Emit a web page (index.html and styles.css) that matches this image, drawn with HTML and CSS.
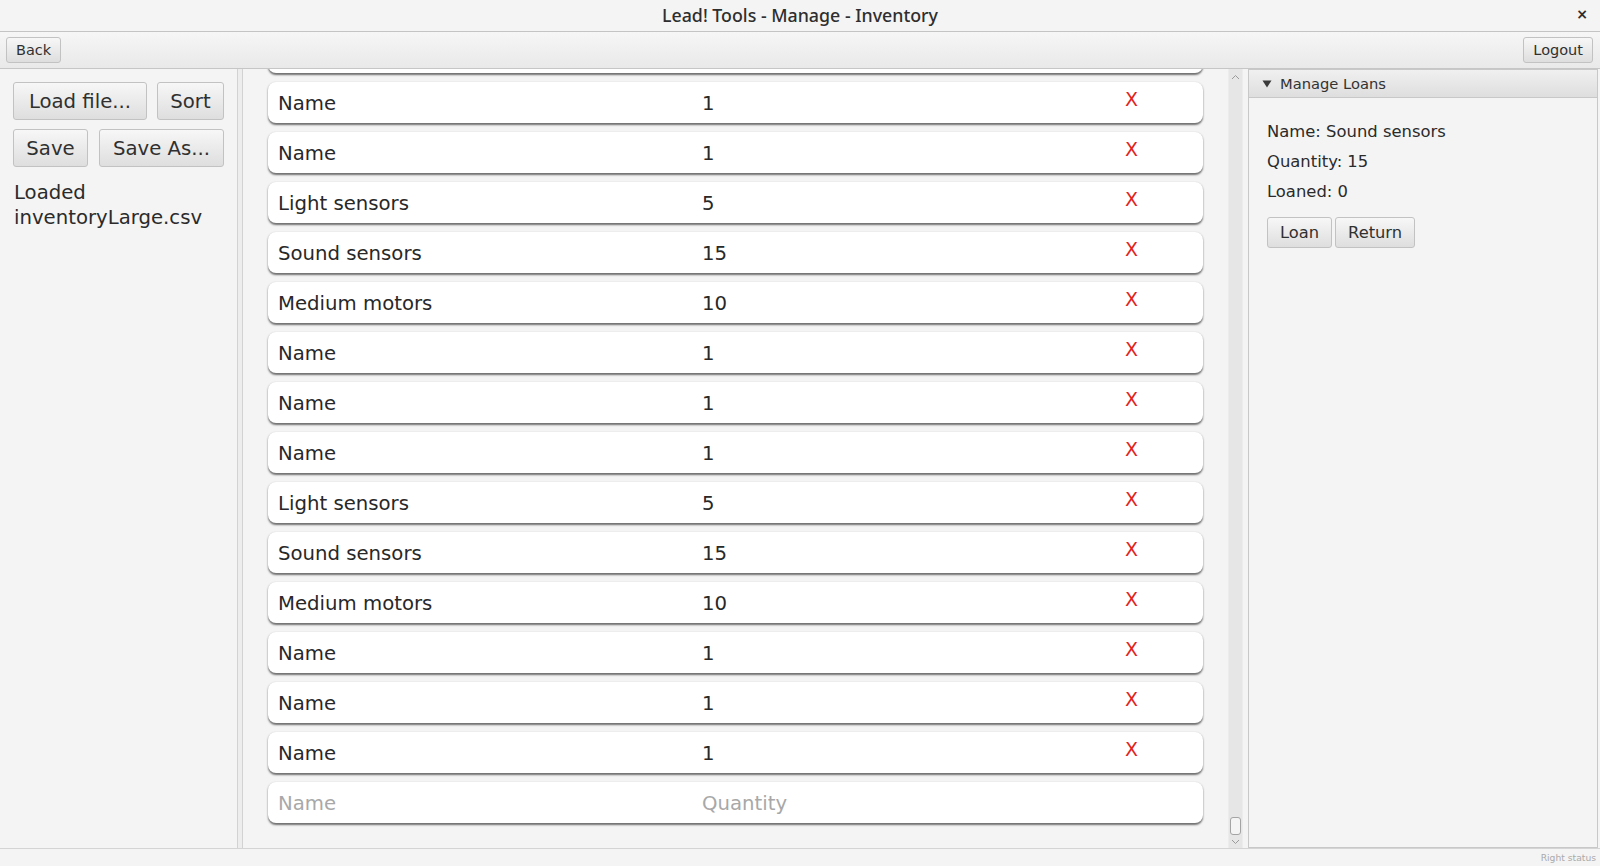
FILE: index.html
```html
<!DOCTYPE html>
<html>
<head>
<meta charset="utf-8">
<title>Lead! Tools - Manage - Inventory</title>
<link rel="stylesheet" href="styles.css">
</head>
<body>
<div class="window">
  <div class="titlebar">
    <span class="title">Lead! Tools - Manage - Inventory</span>
    <span class="close">×</span>
  </div>
  <div class="toolbar">
    <button class="btn tb">Back</button>
    <button class="btn tb">Logout</button>
  </div>
  <div class="main">
    <aside class="left">
      <div class="btnrow">
        <button class="btn big w-load">Load file...</button>
        <button class="btn big w-sort">Sort</button>
      </div>
      <div class="btnrow">
        <button class="btn big w-save">Save</button>
        <button class="btn big w-saveas">Save As...</button>
      </div>
      <div class="loaded">Loaded<br>inventoryLarge.csv</div>
    </aside>
    <div class="divider"></div>
    <div class="center">
      <div class="scroll">
        <div class="list">
          <div class="row"></div>
          <div class="row"><span class="c-name">Name</span><span class="c-qty">1</span><span class="c-del">X</span></div>
          <div class="row"><span class="c-name">Name</span><span class="c-qty">1</span><span class="c-del">X</span></div>
          <div class="row"><span class="c-name">Light sensors</span><span class="c-qty">5</span><span class="c-del">X</span></div>
          <div class="row"><span class="c-name">Sound sensors</span><span class="c-qty">15</span><span class="c-del">X</span></div>
          <div class="row"><span class="c-name">Medium motors</span><span class="c-qty">10</span><span class="c-del">X</span></div>
          <div class="row"><span class="c-name">Name</span><span class="c-qty">1</span><span class="c-del">X</span></div>
          <div class="row"><span class="c-name">Name</span><span class="c-qty">1</span><span class="c-del">X</span></div>
          <div class="row"><span class="c-name">Name</span><span class="c-qty">1</span><span class="c-del">X</span></div>
          <div class="row"><span class="c-name">Light sensors</span><span class="c-qty">5</span><span class="c-del">X</span></div>
          <div class="row"><span class="c-name">Sound sensors</span><span class="c-qty">15</span><span class="c-del">X</span></div>
          <div class="row"><span class="c-name">Medium motors</span><span class="c-qty">10</span><span class="c-del">X</span></div>
          <div class="row"><span class="c-name">Name</span><span class="c-qty">1</span><span class="c-del">X</span></div>
          <div class="row"><span class="c-name">Name</span><span class="c-qty">1</span><span class="c-del">X</span></div>
          <div class="row"><span class="c-name">Name</span><span class="c-qty">1</span><span class="c-del">X</span></div>
          <div class="row input"><span class="c-name">Name</span><span class="c-qty">Quantity</span></div>
        </div>
      </div>
      <div class="vscroll">
        <svg class="arrow" width="9" height="6" viewBox="0 0 9 6"><path d="M1 5 L4.5 1.5 L8 5" fill="none" stroke="#9a9a9a" stroke-width="1"/></svg>
        <div class="vbottom">
          <div class="thumb"></div>
          <svg class="arrow" width="9" height="6" viewBox="0 0 9 6"><path d="M1 1 L4.5 4.5 L8 1" fill="none" stroke="#9a9a9a" stroke-width="1"/></svg>
        </div>
      </div>
    </div>
    <div class="divider2"></div>
    <section class="right">
      <div class="pane-head">
        <svg class="tri" width="10" height="8" viewBox="0 0 10 8"><path d="M0.5 0.5 H9.5 L5 7.5 Z" fill="#3a3a3a"/></svg>
        <span>Manage Loans</span>
      </div>
      <div class="pane-body">
        <div class="info">Name: Sound sensors</div>
        <div class="info">Quantity: 15</div>
        <div class="info">Loaned: 0</div>
        <div class="loanbtns">
          <button class="btn mid">Loan</button>
          <button class="btn mid">Return</button>
        </div>
      </div>
    </section>
  </div>
  <div class="status"><span>Right status</span></div>
</div>
</body>
</html>
```

FILE: styles.css
```css
* { box-sizing: border-box; }
html, body { margin: 0; padding: 0; }
body {
  width: 1600px;
  height: 866px;
  overflow: hidden;
  background: #f4f4f4;
  font-family: "DejaVu Sans", "Liberation Sans", sans-serif;
  color: #2b2b2b;
}
.window {
  display: flex;
  flex-direction: column;
  height: 866px;
}
.titlebar {
  height: 32px;
  flex: none;
  border-bottom: 1px solid #c4c4c4;
  background: #f4f4f4;
  display: flex;
  align-items: center;
  justify-content: center;
  position: relative;
}
.title {
  font-family: "Noto Sans", "DejaVu Sans", sans-serif;
  font-weight: 500;
  font-size: 17.8px;
  color: #2e2e2e;
  margin-top: -1px;
}
.close {
  position: absolute;
  right: 12px;
  top: 6px;
  font-size: 14px;
  font-weight: bold;
  color: #2e2e2e;
}
.toolbar {
  height: 37px;
  flex: none;
  border-bottom: 1px solid #c6c6c6;
  background: linear-gradient(#f6f6f6, #e9e9e9);
  display: flex;
  align-items: center;
  justify-content: space-between;
  padding: 0 7px 0 6px;
}
.btn {
  font-family: "DejaVu Sans", "Liberation Sans", sans-serif;
  color: #303030;
  background: linear-gradient(#f7f7f7, #dedede);
  border: 1px solid #c2c2c2;
  border-radius: 3px;
  padding: 0;
  margin: 0;
  display: flex;
  align-items: center;
  justify-content: center;
}
.tb {
  height: 26px;
  font-size: 14.5px;
  padding: 0 9px;
}
.main {
  flex: 1;
  display: flex;
  min-height: 0;
}
.left {
  width: 237px;
  flex: none;
  padding: 13px 13px 0 13px;
  background: #f4f4f4;
}
.btnrow {
  display: flex;
  justify-content: space-between;
  margin-bottom: 9px;
}
.big {
  height: 38px;
  font-size: 19.7px;
}
.w-load { width: 134px; }
.w-sort { width: 67px; }
.w-save { width: 75px; }
.w-saveas { width: 125px; }
.loaded {
  font-size: 19.7px;
  line-height: 25px;
  padding-left: 1px;
  margin-top: 13px;
}
.divider {
  width: 6px;
  flex: none;
  border-left: 1px solid #d2d2d2;
  border-right: 1px solid #d2d2d2;
  background: #ededed;
}
.center {
  flex: none;
  width: 1000px;
  display: flex;
  background: #f4f4f4;
}
.scroll {
  flex: 1;
  overflow: hidden;
  padding-left: 25px;
}
.list {
  width: 935px;
  margin-top: -37px;
  display: flex;
  flex-direction: column;
  gap: 9px;
}
.row {
  height: 41px;
  flex: none;
  background: #fff;
  border-radius: 8px;
  box-shadow: 0 1.5px 2px rgba(0, 0, 0, 0.55);
  display: flex;
  align-items: center;
  padding: 2px 0 0 10px;
  font-size: 19.7px;
  color: #282828;
}
.c-name { width: 424px; flex: none; }
.c-qty { width: 423px; flex: none; }
.c-del { color: #e3231a; font-size: 19px; margin-top: -10px; }
.row.input { color: #a8a8a8; }
.vscroll {
  width: 15px;
  flex: none;
  background: #e6e6e6;
  border-left: 1px solid #ececec;
  border-right: 1px solid #ececec;
  display: flex;
  flex-direction: column;
  align-items: center;
  justify-content: space-between;
  padding: 5px 0 3px;
}
.vbottom {
  display: flex;
  flex-direction: column;
  align-items: center;
  gap: 4px;
}
.thumb {
  width: 11px;
  height: 18px;
  border: 1px solid #a4a4a4;
  border-radius: 3px;
  background: #f4f4f4;
}
.arrow { display: block; }
.divider2 {
  width: 5px;
  flex: none;
  background: #f4f4f4;
}
.right {
  width: 350px;
  flex: none;
  border: 1px solid #c8c8c8;
  background: #f4f4f4;
  margin-right: 2px;
}
.pane-head {
  height: 28px;
  background: linear-gradient(#f0f0f0, #dedede);
  border-bottom: 1px solid #c8c8c8;
  display: flex;
  align-items: center;
  padding-left: 13px;
  gap: 8px;
  font-size: 14.7px;
  color: #333;
}
.tri { display: block; }
.pane-body {
  padding: 19px 0 0 18px;
}
.info {
  font-size: 16.4px;
  line-height: 30px;
  color: #2b2b2b;
}
.loanbtns {
  display: flex;
  gap: 3px;
  margin-top: 10px;
}
.mid {
  height: 31px;
  font-size: 16.3px;
  padding: 0 12px;
}
.status {
  height: 18px;
  flex: none;
  border-top: 1px solid #d4d4d4;
  background: #f4f4f4;
  display: flex;
  align-items: center;
  justify-content: flex-end;
  padding-right: 4px;
  font-size: 9.2px;
  color: #aaa;
}
```
